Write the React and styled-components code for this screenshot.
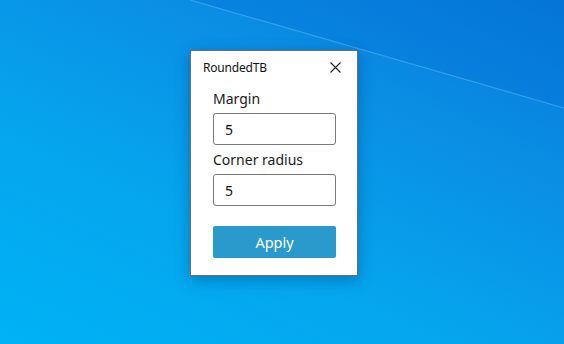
import React from "react";
import styled, { createGlobalStyle } from "styled-components";

const Global = createGlobalStyle`
  html, body { margin: 0; padding: 0; }
  body { width: 564px; height: 344px; overflow: hidden; }
`;

const Desktop = styled.div`
  position: relative;
  width: 564px;
  height: 344px;
  overflow: hidden;
  background: linear-gradient(205deg, #0677d8 0%, #0a8ee4 30%, #05a6ee 65%, #00b2f5 100%);
  font-family: "Noto Sans", "Open Sans", sans-serif;
  padding: 50px 0 0 190px;
  box-sizing: border-box;
`;

const Wallpaper = styled.svg`
  position: absolute;
  inset: 0;
  pointer-events: none;
`;

const Window = styled.div`
  position: relative;
  width: 168px;
  height: 226px;
  box-sizing: border-box;
  background: #ffffff;
  border: 1px solid #6d6d6d;
  box-shadow: 0 4px 14px rgba(0, 40, 90, 0.35);
  display: flex;
  flex-direction: column;
`;

const TitleBar = styled.div`
  height: 32px;
  display: flex;
  align-items: center;
  justify-content: space-between;
  padding: 0 16px 0 12px;
`;

const Title = styled.span`
  font-size: 12px;
  color: #111;
  letter-spacing: -0.2px;
`;

const Close = styled.svg`
  width: 11px;
  height: 11px;
  display: block;
`;

const Form = styled.div`
  display: flex;
  flex-direction: column;
  padding: 6px 21px 0 22px;
`;

const Label = styled.label`
  font-size: 14px;
  line-height: 19px;
  color: #1a1a1a;
  margin-bottom: 5px;
`;

const Field = styled.div`
  height: 32px;
  box-sizing: border-box;
  border: 1px solid #7a7a7a;
  border-radius: 3px;
  display: flex;
  align-items: center;
  padding-left: 11px;
  font-size: 14px;
  color: #111;
  margin-bottom: ${(p) => p.$gap}px;
`;

const Button = styled.div`
  height: 32px;
  border-radius: 2px;
  background: #2a99cb;
  color: #fff;
  font-size: 14.5px;
  display: flex;
  align-items: center;
  justify-content: center;
`;

export default function App() {
  return (
    <>
      <Global />
      <Desktop>
        <Wallpaper width="564" height="344" viewBox="0 0 564 344">
          <polygon points="190,0 564,0 564,108" fill="#0470d6" opacity="0.3" />
          <line x1="190" y1="0" x2="564" y2="108" stroke="#5cb8f0" strokeWidth="1.2" opacity="0.55" />
        </Wallpaper>
        <Window>
          <TitleBar>
            <Title>RoundedTB</Title>
            <Close viewBox="0 0 11 11">
              <path d="M0.5 0.5 L10.5 10.5 M10.5 0.5 L0.5 10.5" stroke="#222" strokeWidth="1.1" />
            </Close>
          </TitleBar>
          <Form>
            <Label>Margin</Label>
            <Field $gap={5}>5</Field>
            <Label>Corner radius</Label>
            <Field $gap={20}>5</Field>
            <Button>Apply</Button>
          </Form>
        </Window>
      </Desktop>
    </>
  );
}
